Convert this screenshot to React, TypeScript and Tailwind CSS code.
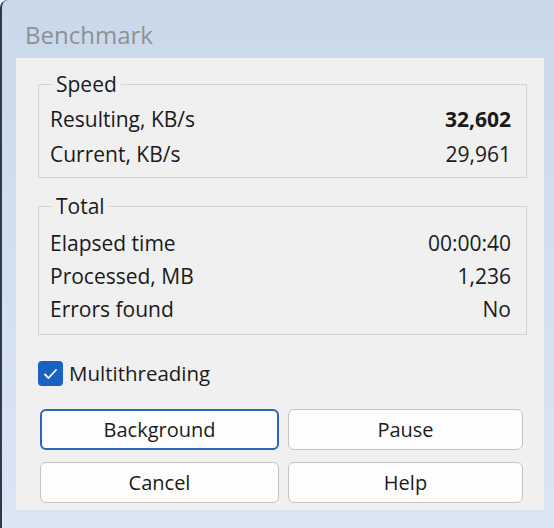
import React from "react";

const font = { fontFamily: '"Open Sans", "Noto Sans", sans-serif' };

function Row({ label, value, bold }: { label: string; value: string; bold?: boolean }) {
  return (
    <div className="flex justify-between leading-[35px]">
      <span>{label}</span>
      <span className={bold ? "font-bold" : ""}>{value}</span>
    </div>
  );
}

function Btn({ children, focused }: { children: React.ReactNode; focused?: boolean }) {
  return (
    <button
      className={
        "h-[41px] rounded-[6px] bg-[#fdfdfd] text-[20px] text-[#1b1b1b] " +
        (focused ? "border-2 border-[#2469b5]" : "border border-[#c3c3c3]")
      }
    >
      {children}
    </button>
  );
}

export default function App() {
  return (
    <div
      className="w-[554px] h-[528px] overflow-hidden bg-[#eef2f6] text-[#1a1a1a]"
      style={font}
    >
      <div className="w-[554px] h-[528px] rounded-tl-[8px] border-l-2 border-[#2f3a52] bg-gradient-to-b from-[#c9d9ea] to-[#dbe6f3] pl-[14px] pr-[10px] flex flex-col">
        <div className="h-[58px] pt-[19px] pl-[9px] leading-[32px] text-[24px] text-[#8b9197]">
          Benchmark
        </div>
        <div className="w-[528px] h-[452px] bg-[#f0f0f0] pl-[22px] pr-[17px] pt-[13px] text-[21px]">
          <fieldset className="border border-[#d4d4d4] pb-[5px]">
            <legend className="ml-[13px] px-[4px] leading-[26px]">Speed</legend>
            <div className="pl-[11px] pr-[15px] pt-[5px]">
              <Row label="Resulting, KB/s" value="32,602" bold />
              <Row label="Current, KB/s" value="29,961" />
            </div>
          </fieldset>
          <fieldset className="mt-[15px] border border-[#d4d4d4] pb-[8px]">
            <legend className="ml-[13px] px-[4px] leading-[26px]">Total</legend>
            <div className="pl-[11px] pr-[15px] pt-[8px] [&>div]:leading-[33px]">
              <Row label="Elapsed time" value="00:00:40" />
              <Row label="Processed, MB" value="1,236" />
              <Row label="Errors found" value="No" />
            </div>
          </fieldset>
          <div className="mt-[26px] flex items-center gap-[6px] h-[25px]">
            <div className="w-[25px] h-[25px] rounded-[4px] bg-[#1862c6] flex items-center justify-center">
              <svg width="15" height="12" viewBox="0 0 15 12" fill="none">
                <path d="M2 6.5 L5.5 10 L13 2" stroke="white" strokeWidth="1.8" strokeLinecap="round" strokeLinejoin="round" />
              </svg>
            </div>
            <span className="text-[20.5px]">Multithreading</span>
          </div>
          <div className="mt-[23px] ml-[2px] grid grid-cols-[239px_235px] gap-x-[9px] gap-y-[12px]">
            <Btn focused>Background</Btn>
            <Btn>Pause</Btn>
            <Btn>Cancel</Btn>
            <Btn>Help</Btn>
          </div>
        </div>
      </div>
    </div>
  );
}
